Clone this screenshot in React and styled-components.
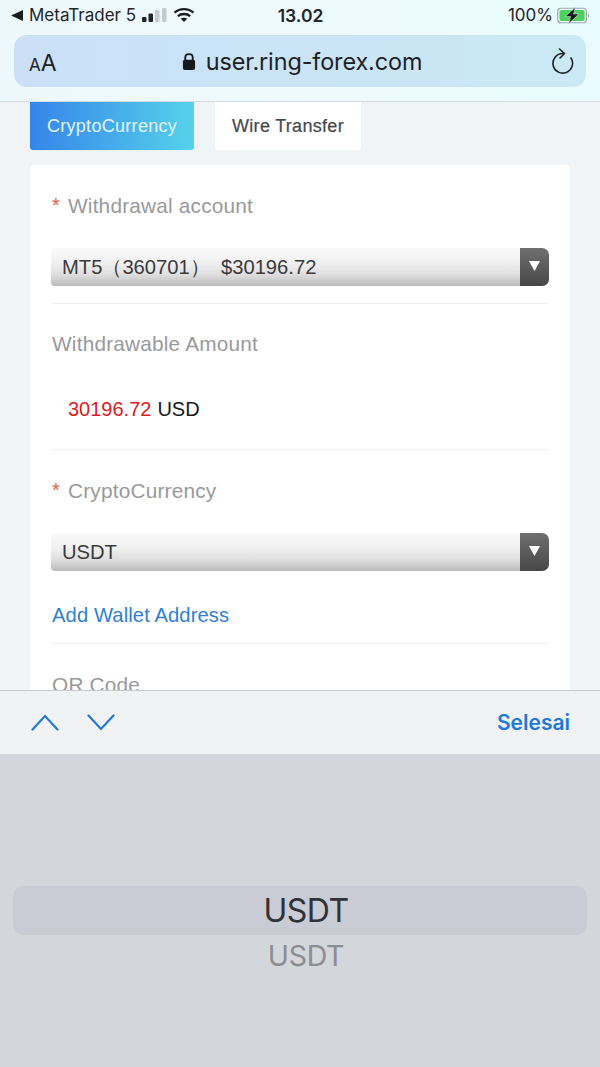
import React from 'react';
import styled, { createGlobalStyle } from 'styled-components';

const GlobalStyle=createGlobalStyle`
  html, body {
    margin: 0;
    padding: 0;
    background: #f1f4f6;
  }
  * {
    box-sizing: border-box;
  }
`;

const Screen=styled.div`
  width: 600px;
  height: 1067px;
  display: flex;
  flex-direction: column;
  overflow: hidden;
  font-family: "Liberation Sans", Arial, sans-serif;
`;

const Header=styled.header`
  height: 102px;
  flex: none;
  padding: 0 14px;
  background: linear-gradient(90deg, #edf8fd 0%, #eefbfe 55%, #e9fbfe 100%);
  border-bottom: 1px solid #d3dce0;
`;

const StatusBar=styled.div`
  height: 35px;
  display: grid;
  grid-template-columns: 1fr auto 1fr;
  align-items: center;
  margin: 0 -4px;
  padding: 0 0 5px 1px;
  font-family: Inter, sans-serif;
  font-size: 17px;
  color: #22262a;
`;

const StatusLeft=styled.div`
  display: flex;
  align-items: center;
  gap: 6px;
`;

const StatusRight=styled.div`
  display: flex;
  align-items: center;
  justify-content: flex-end;
  gap: 4px;
`;

const Clock=styled.span`
  font-weight: 600;
  font-size: 17.5px;
`;

const AddressBar=styled.div`
  height: 52px;
  display: flex;
  align-items: center;
  justify-content: space-between;
  padding: 0 12px 0 15px;
  border-radius: 13px;
  background: linear-gradient(90deg, #cbe0f7 0%, #cae4f5 50%, #cbe9f5 100%);
  color: #1d2125;
`;

const TextSize=styled.span`
  font-family: Inter, sans-serif;
  font-size: 23px;
  width: 30px;
  padding-top: 3px;
  white-space: nowrap;
`;

const SmallA=styled.span`
  font-size: 17px;
`;

const Url=styled.div`
  display: flex;
  align-items: center;
  gap: 10px;
  font-family: Inter, sans-serif;
  font-size: 23.4px;
  letter-spacing: -0.1px;
  padding-right: 5px;
`;

const Page=styled.main`
  height: 588px;
  flex: none;
  overflow: hidden;
  padding: 0 30px;
  background: #f1f4f6;
`;

const Tabs=styled.div`
  display: flex;
  gap: 21px;
  height: 48px;
  margin-bottom: 15px;
`;

const Tab=styled.div`
  display: flex;
  align-items: center;
  justify-content: center;
  width: ${p => p.$active ? 164 : 146}px;
  border-radius: 0 0 3px 3px;
  font-size: 18px;
  letter-spacing: 0.3px;
  color: ${p => p.$active ? '#e3f4fb' : '#45484b'};
  background: ${p => p.$active ? 'linear-gradient(90deg, #3585ea, #55d2ea)' : '#fff'};
  -webkit-text-stroke: ${p => p.$active ? '0' : '0.2px'};
`;

const Card=styled.section`
  background: #fff;
  border-radius: 4px 4px 0 0;
  padding: 0 22px;
  height: 540px;
`;

const Label=styled.div`
  height: ${p => p.$height}px;
  display: flex;
  align-items: center;
  gap: 8px;
  padding-bottom: 2px;
  font-size: 20.8px;
  letter-spacing: 0.2px;
  color: #98999b;
`;

const Star=styled.span`
  color: #e0604c;
  font-size: 20px;
`;

const Select=styled.div`
  height: 38px;
  display: flex;
  align-items: center;
  justify-content: space-between;
  border-radius: 4px 7px 7px 4px;
  overflow: hidden;
  margin: 0 -1px ${p => p.$gap}px;
  background: linear-gradient(180deg, #fafafa 0%, #f0f0f0 40%, #dedede 70%, #bbbbbb 100%);
  font-size: 20.2px;
  color: #3a3b3d;
`;

const SelectText=styled.span`
  padding-left: 11px;
  white-space: pre;
`;

const SelectArrow=styled.span`
  width: 29px;
  height: 100%;
  display: flex;
  align-items: center;
  justify-content: center;
  padding-bottom: 3px;
  background: linear-gradient(180deg, #6f6f6f, #474747);
`;

const Divider=styled.hr`
  height: 1px;
  border: 0;
  margin: 0;
  background: #eceeef;
`;

const Amount=styled.div`
  height: 63px;
  display: flex;
  align-items: center;
  padding: 0 0 16px 16px;
  font-size: 20px;
  color: #17191b;
`;

const Red=styled.span`
  color: #d9201f;
  margin-right: 6px;
`;

const WalletLink=styled.a`
  height: 72px;
  display: flex;
  align-items: center;
  padding-top: 16px;
  font-size: 20.2px;
  letter-spacing: 0.1px;
  color: #2f80d2;
`;

const Toolbar=styled.div`
  height: 64px;
  flex: none;
  display: flex;
  align-items: center;
  justify-content: space-between;
  padding: 0 30px 0 31px;
  background: #f0f2f3;
  border-top: 1px solid #c8cbce;
`;

const Arrows=styled.div`
  display: flex;
  gap: 28px;
`;

const Done=styled.span`
  font-family: Inter, sans-serif;
  font-weight: 600;
  font-size: 21px;
  color: #2279d8;
`;

const Picker=styled.div`
  flex: 1;
  display: flex;
  flex-direction: column;
  padding: 132px 13px 0;
  background: #d3d6db;
`;

const PickerSelected=styled.div`
  height: 49px;
  display: flex;
  align-items: center;
  justify-content: center;
  padding-left: 12px;
  border-radius: 11px;
  background: #c9ccd4;
  font-family: Inter, sans-serif;
  font-size: 32px;
  letter-spacing: -0.5px;
  color: #2f3238;
`;

const PickerOption=styled.div`
  height: 40px;
  display: flex;
  align-items: center;
  justify-content: center;
  padding-left: 12px;
  font-family: Inter, sans-serif;
  font-size: 28.5px;
  letter-spacing: -0.3px;
  color: #8b8d92;
`;

const Back=()=>(
  <svg width="12" height="11" viewBox="0 0 12 11">
    <path d="M0 5.5 L12 0 V11 Z" fill="#1b1f22" />
  </svg>
);

const Signal=()=>(
  <svg width="25" height="14" viewBox="0 0 25 14">
    <rect x="0" y="9" width="4.5" height="5" rx="1" fill="#22262a" />
    <rect x="6.5" y="5.5" width="4.5" height="8.5" rx="1" fill="#22262a" />
    <rect x="13" y="2" width="4.5" height="12" rx="1" fill="#c4cbcf" />
    <rect x="20" y="0" width="4.5" height="14" rx="1" fill="#c4cbcf" />
  </svg>
);

const Wifi=()=>(
  <svg width="22" height="16" viewBox="0 0 23 17" fill="none" stroke="#1b1f22" strokeWidth="2.6">
    <path d="M1.5 6 C7 1 16 1 21.5 6" />
    <path d="M5 9.7 C8.5 6.6 14.5 6.6 18 9.7" />
    <path d="M11.5 16 L8 12.6 C10 11 13 11 15 12.6 Z" fill="#1b1f22" stroke="none" />
  </svg>
);

const Battery=()=>(
  <svg width="33" height="17" viewBox="0 0 34 17">
    <rect x="0.7" y="1" width="29.6" height="15" rx="3.5" fill="none" stroke="#9fa8a6" strokeWidth="1.2" />
    <rect x="2.5" y="2.8" width="26" height="11.4" rx="2" fill="#4fd05f" />
    <path d="M32 6 C33.4 6.5 33.4 10.5 32 11 Z" fill="#9fa8a6" />
    <path d="M19 0 L8.5 9.5 H14 L12 17 L22.5 7 H17 Z" fill="#16191a" stroke="#e9fbfe" strokeWidth="0.5" />
  </svg>
);

const Lock=()=>(
  <svg width="14" height="19" viewBox="0 0 15 19">
    <path d="M3.5 8 V5.2 C3.5 0.4 11.5 0.4 11.5 5.2 V8" fill="none" stroke="#16191c" strokeWidth="2" />
    <rect x="1" y="7.5" width="13" height="11" rx="2" fill="#16191c" />
  </svg>
);

const Reload=()=>(
  <svg width="24" height="27" viewBox="0 0 24 27" fill="none" stroke="#1d2125" strokeWidth="1.6" strokeLinecap="round" strokeLinejoin="round">
    <path d="M13 5.5 A9.8 9.8 0 1 0 21 10" />
    <path d="M9.5 1 L14.5 5.5 L10 10" />
  </svg>
);

const Chevron=({ up })=>(
  <svg width="28" height="17" viewBox="0 0 28 17" fill="none" stroke="#2279d8" strokeWidth="2.2" strokeLinecap="round">
    <path d={up ? 'M1.5 15.5 L14 2 L26.5 15.5' : 'M1.5 1.5 L14 15 L26.5 1.5'} />
  </svg>
);

const Caret=()=>(
  <svg width="11" height="10" viewBox="0 0 11 10">
    <path d="M0 0 H11 L5.5 10 Z" fill="#fff" />
  </svg>
);

const Field=({ children, gap })=>(
  <Select $gap={gap}>
    <SelectText>{children}</SelectText>
    <SelectArrow><Caret /></SelectArrow>
  </Select>
);

export default function App(){
  return (
    <Screen>
      <GlobalStyle />
      <Header>
        <StatusBar>
          <StatusLeft>
            <Back />
            <span>MetaTrader 5</span>
            <Signal />
            <Wifi />
          </StatusLeft>
          <Clock>13.02</Clock>
          <StatusRight>
            <span>100%</span>
            <Battery />
          </StatusRight>
        </StatusBar>
        <AddressBar>
          <TextSize><SmallA>A</SmallA>A</TextSize>
          <Url><Lock />user.ring-forex.com</Url>
          <Reload />
        </AddressBar>
      </Header>
      <Page>
        <Tabs>
          <Tab $active>CryptoCurrency</Tab>
          <Tab>Wire Transfer</Tab>
        </Tabs>
        <Card>
          <Label $height={83}><Star>*</Star>Withdrawal account</Label>
          <Field gap={17}>MT5（360701）  $30196.72</Field>
          <Divider />
          <Label $height={82}>Withdrawable Amount</Label>
          <Amount><Red>30196.72</Red>USD</Amount>
          <Divider />
          <Label $height={83}><Star>*</Star>CryptoCurrency</Label>
          <Field gap={0}>USDT</Field>
          <WalletLink>Add Wallet Address</WalletLink>
          <Divider />
          <Label $height={83}>QR Code</Label>
        </Card>
      </Page>
      <Toolbar>
        <Arrows>
          <Chevron up />
          <Chevron />
        </Arrows>
        <Done>Selesai</Done>
      </Toolbar>
      <Picker>
        <PickerSelected>USDT</PickerSelected>
        <PickerOption>USDT</PickerOption>
      </Picker>
    </Screen>
  );
}
